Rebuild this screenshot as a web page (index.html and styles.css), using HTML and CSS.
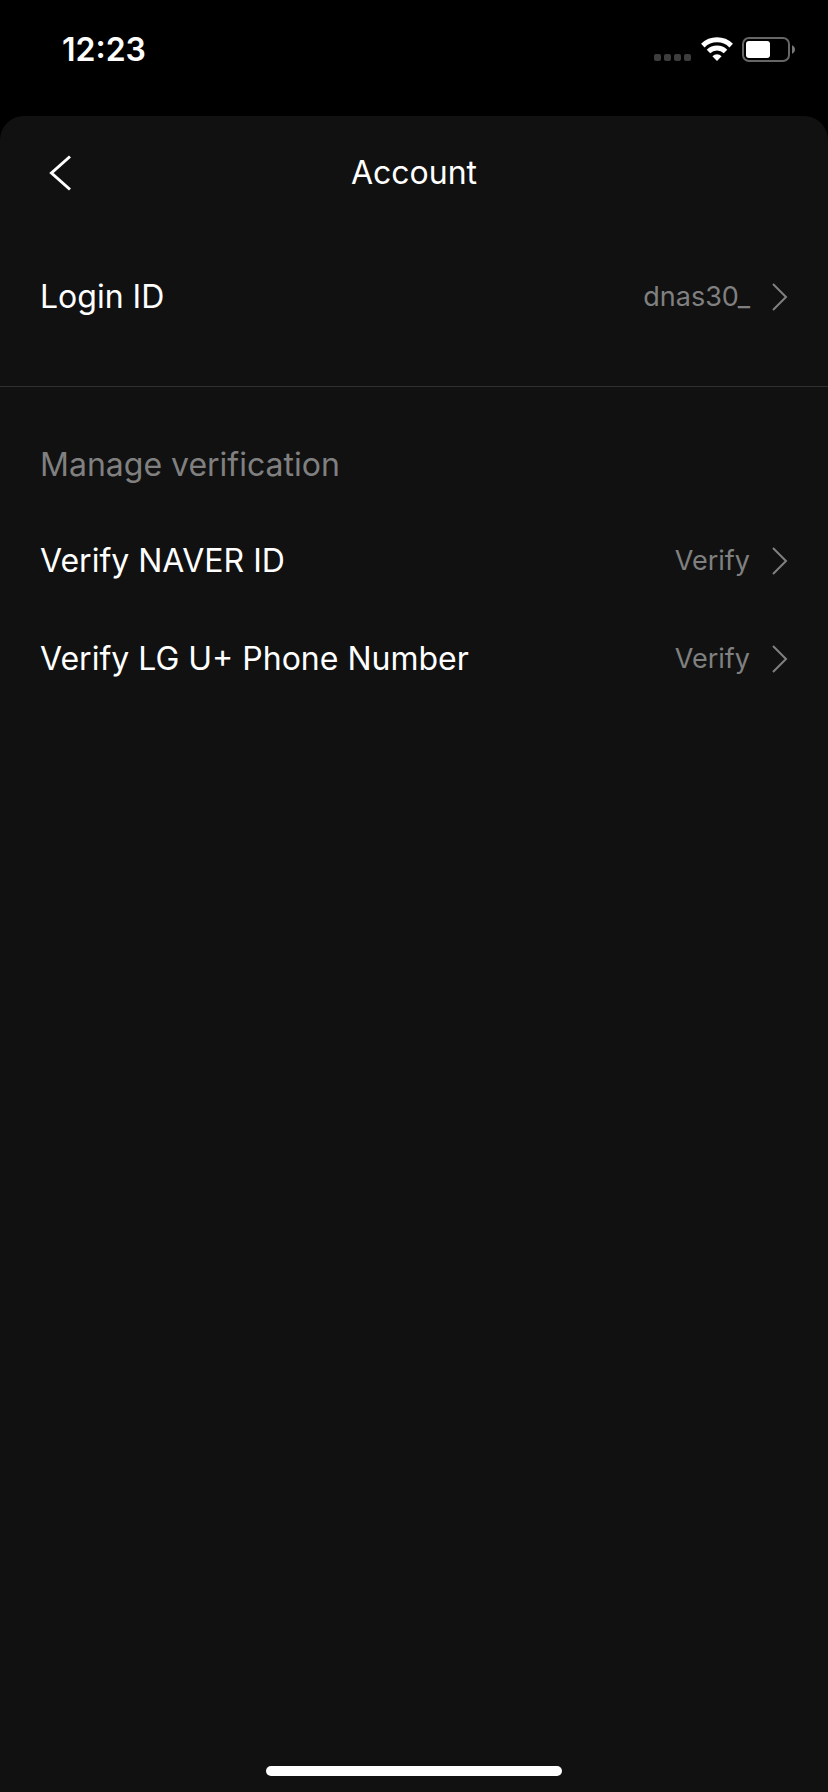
FILE: index.html
```html
<!DOCTYPE html>
<html lang="en">
<head>
<meta charset="utf-8">
<meta name="viewport" content="width=device-width, initial-scale=1">
<title>Account</title>
<link rel="stylesheet" href="styles.css">
</head>
<body>
<div class="status-bar">
  <time class="clock">12:23</time>
  <div class="indicators">
    <svg class="signal" width="38" height="26" viewBox="0 0 38 26" fill="#3d3d3d" aria-hidden="true">
      <rect x="0" y="17" width="7" height="7" rx="2"/>
      <rect x="10" y="17" width="7" height="7" rx="2"/>
      <rect x="20" y="17" width="7" height="7" rx="2"/>
      <rect x="30" y="17" width="7" height="7" rx="2"/>
    </svg>
    <svg class="wifi" width="32" height="26" viewBox="0 0 32 26" aria-hidden="true">
      <g fill="none" stroke="#fff" stroke-width="5">
        <path d="M1.8 8.6a20.4 20.4 0 0 1 28.4 0"/>
        <path d="M7.5 14.5a12.2 12.2 0 0 1 17 0"/>
      </g>
      <path d="M11.4 19.2a6.7 6.7 0 0 1 9.2 0L16 24.1z" fill="#fff"/>
    </svg>
    <svg class="battery" width="54" height="26" viewBox="0 0 54 26" aria-hidden="true">
      <rect x="1" y="1" width="46" height="23" rx="6" fill="none" stroke="#666" stroke-width="2"/>
      <rect x="4" y="4" width="24" height="17" rx="3" fill="#fff"/>
      <path d="M50 8.2c4 1.6 4 7 0 8.6z" fill="#777"/>
    </svg>
  </div>
</div>
<main class="sheet">
  <header class="header">
    <button class="back" type="button" aria-label="Back">
      <svg width="24" height="36" viewBox="0 0 24 36" fill="none" stroke="#fff" stroke-width="3" aria-hidden="true"><path d="M22 1.5 3.5 18 22 34.5"/></svg>
    </button>
    <h1 class="title">Account</h1>
  </header>
  <section class="login">
    <button class="row" type="button">
      <span class="label">Login ID</span>
      <span class="value">dnas30_</span>
      <svg class="chevron" width="16" height="28" viewBox="0 0 16 28" aria-hidden="true"><path d="m1 1 13 13L1 27"/></svg>
    </button>
  </section>
  <section class="verification">
    <h2 class="heading">Manage verification</h2>
    <button class="row" type="button">
      <span class="label">Verify NAVER ID</span>
      <span class="value">Verify</span>
      <svg class="chevron" width="16" height="28" viewBox="0 0 16 28" aria-hidden="true"><path d="m1 1 13 13L1 27"/></svg>
    </button>
    <button class="row" type="button">
      <span class="label">Verify LG U+ Phone Number</span>
      <span class="value">Verify</span>
      <svg class="chevron" width="16" height="28" viewBox="0 0 16 28" aria-hidden="true"><path d="m1 1 13 13L1 27"/></svg>
    </button>
  </section>
  <div class="home-indicator"></div>
</main>
</body>
</html>
```
FILE: styles.css
```css
* { box-sizing: border-box; }
body {
  margin: 0;
  min-height: 100vh;
  display: flex;
  flex-direction: column;
  background: #000;
  color: #fff;
  font-family: Inter, "Liberation Sans", sans-serif;
}
button {
  border: 0;
  background: none;
  color: inherit;
  font: inherit;
  text-align: left;
}
svg { display: block; }
.status-bar {
  height: 116px;
  padding: 30px 32px 0 62px;
  display: flex;
  justify-content: space-between;
  align-items: flex-start;
}
.clock {
  font-size: 32px;
  line-height: 40px;
  font-weight: 600;
}
.indicators {
  display: flex;
  gap: 9px;
  padding-top: 7px;
}
.sheet {
  flex: 1;
  display: flex;
  flex-direction: column;
  background: #111;
  border-radius: 24px 24px 0 0;
}
.header {
  height: 114px;
  padding: 0 38px;
  display: grid;
  grid-template-columns: 48px 1fr 48px;
  align-items: center;
}
.back { padding: 10px; }
.title {
  margin: 0;
  text-align: center;
  font-size: 32px;
  line-height: 40px;
  font-weight: 400;
}
.login {
  padding: 18px 0 40px;
  border-bottom: 1px solid #303030;
}
.row {
  width: 100%;
  height: 98px;
  padding: 0 40px;
  display: flex;
  align-items: center;
}
.label {
  flex: 1;
  font-size: 32px;
  line-height: 40px;
}
.value {
  color: #808080;
  font-size: 27px;
  line-height: 40px;
}
.chevron {
  margin-left: 22px;
  fill: none;
  stroke: #808080;
  stroke-width: 2;
}
.verification { padding-top: 58px; }
.heading {
  margin: 0 0 27px;
  padding: 0 40px;
  color: #808080;
  font-size: 32px;
  line-height: 40px;
  font-weight: 400;
}
.home-indicator {
  width: 296px;
  height: 10px;
  margin: auto auto 16px;
  border-radius: 5px;
  background: #fff;
}
```
